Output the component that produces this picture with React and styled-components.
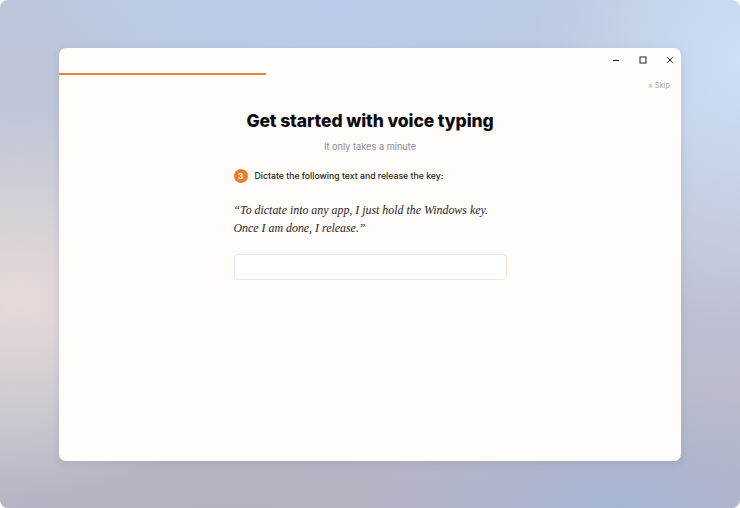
import React from 'react'
import styled, { createGlobalStyle } from 'styled-components'

const Global = createGlobalStyle`
  html, body { margin: 0; padding: 0; background: #fff; }
  body { font-family: Inter, "Noto Sans", sans-serif; }
  * { box-sizing: border-box; }
`;

const Desktop = styled.div`
  width: 740px;
  height: 508px;
  border-radius: 8px;
  overflow: hidden;
  display: flex;
  align-items: center;
  justify-content: center;
  background:
    radial-gradient(ellipse 260px 200px at 20px 300px, rgba(232, 220, 216, 0.95), rgba(232, 220, 216, 0) 100%),
    radial-gradient(ellipse 300px 160px at 330px 0px, rgba(186, 204, 236, 1), rgba(186, 204, 236, 0) 100%),
    radial-gradient(ellipse 220px 260px at 740px 60px, rgba(206, 222, 246, 1), rgba(206, 222, 246, 0) 100%),
    radial-gradient(ellipse 260px 120px at 620px 508px, rgba(166, 180, 210, 1), rgba(166, 180, 210, 0) 100%),
    radial-gradient(ellipse 280px 120px at 230px 508px, rgba(180, 176, 190, 1), rgba(180, 176, 190, 0) 100%),
    linear-gradient(180deg, #bcc7dc 0%, #bfc3d3 50%, #b6b6c6 100%);
`;

const Window = styled.div`
  width: 622px;
  height: 413px;
  background: #fffcf9;
  border-radius: 7px;
  box-shadow: 0 2px 8px rgba(60, 60, 90, 0.12);
  display: flex;
  flex-direction: column;
  overflow: hidden;
`;

const TitleBar = styled.div`
  height: 25px;
  display: flex;
  justify-content: flex-end;
  align-items: center;
  gap: 19px;
  padding-right: 7px;
`;

const Control = styled.div`
  width: 8px;
  height: 8px;
  display: flex;
  color: #222;
`;

const Track = styled.div`
  height: 2px;
  width: 100%;
`;

const Fill = styled.div`
  height: 100%;
  width: ${p => p.$pct}%;
  background: #ee8134;
`;

const SkipRow = styled.div`
  display: flex;
  justify-content: flex-end;
  padding: 6px 11px 0 0;
`;

const Skip = styled.span`
  font-size: 7.5px;
  line-height: 10px;
  color: #a9a6a6;
`;

const Column = styled.div`
  width: 273px;
  margin: 0 auto;
  display: flex;
  flex-direction: column;
  align-items: stretch;
`;

const Title = styled.h1`
  margin: 18px -20px 0;
  text-align: center;
  white-space: nowrap;
  font-family: Inter, sans-serif;
  font-weight: 800;
  font-size: 17.5px;
  line-height: 24px;
  color: #0b0b12;
  letter-spacing: -0.1px;
`;

const Subtitle = styled.p`
  margin: 7px 0 0;
  text-align: center;
  font-size: 9.2px;
  line-height: 14px;
  color: #8a8a98;
`;

const Step = styled.div`
  margin-top: 15px;
  display: flex;
  align-items: center;
  gap: 7px;
  height: 14px;
`;

const Badge = styled.span`
  width: 14px;
  height: 14px;
  border-radius: 50%;
  background: #ef7c2c;
  color: #fff;
  font-size: 8px;
  font-weight: 700;
  display: flex;
  align-items: center;
  justify-content: center;
`;

const StepText = styled.span`
  font-size: 8.7px;
  font-weight: 500;
  color: #1d1d24;
  white-space: nowrap;
`;

const Quote = styled.p`
  margin: 18px -20px 0 0;
  font-family: "Liberation Serif", serif;
  font-style: italic;
  font-size: 11.9px;
  line-height: 18px;
  color: #1f1f26;
  white-space: nowrap;
`;

const Input = styled.div`
  margin-top: 17px;
  height: 26px;
  background: #fff;
  border: 1px solid #ebe7e3;
  border-radius: 4px;
`;

const Min = () => (
  <svg width="8" height="8" viewBox="0 0 8 8"><path d="M1 4.5h6" stroke="currentColor" strokeWidth="1" /></svg>
);
const Max = () => (
  <svg width="8" height="8" viewBox="0 0 8 8"><rect x="1" y="1" width="6" height="6" fill="none" stroke="currentColor" strokeWidth="1" /></svg>
);
const Close = () => (
  <svg width="8" height="8" viewBox="0 0 8 8"><path d="M1.2 1.2l5.6 5.6M6.8 1.2l-5.6 5.6" stroke="currentColor" strokeWidth="1" /></svg>
);

const App = () => {
  return (
    <>
      <Global />
      <Desktop>
        <Window>
          <TitleBar>
            <Control><Min /></Control>
            <Control><Max /></Control>
            <Control><Close /></Control>
          </TitleBar>
          <Track><Fill $pct={33.2} /></Track>
          <SkipRow><Skip>» Skip</Skip></SkipRow>
          <Column>
            <Title>Get started with voice typing</Title>
            <Subtitle>It only takes a minute</Subtitle>
            <Step>
              <Badge>3</Badge>
              <StepText>Dictate the following text and release the key:</StepText>
            </Step>
            <Quote>
              “To dictate into any app, I just hold the Windows key.
              <br />
              Once I am done, I release.”
            </Quote>
            <Input />
          </Column>
        </Window>
      </Desktop>
    </>
  )
}

export default App
